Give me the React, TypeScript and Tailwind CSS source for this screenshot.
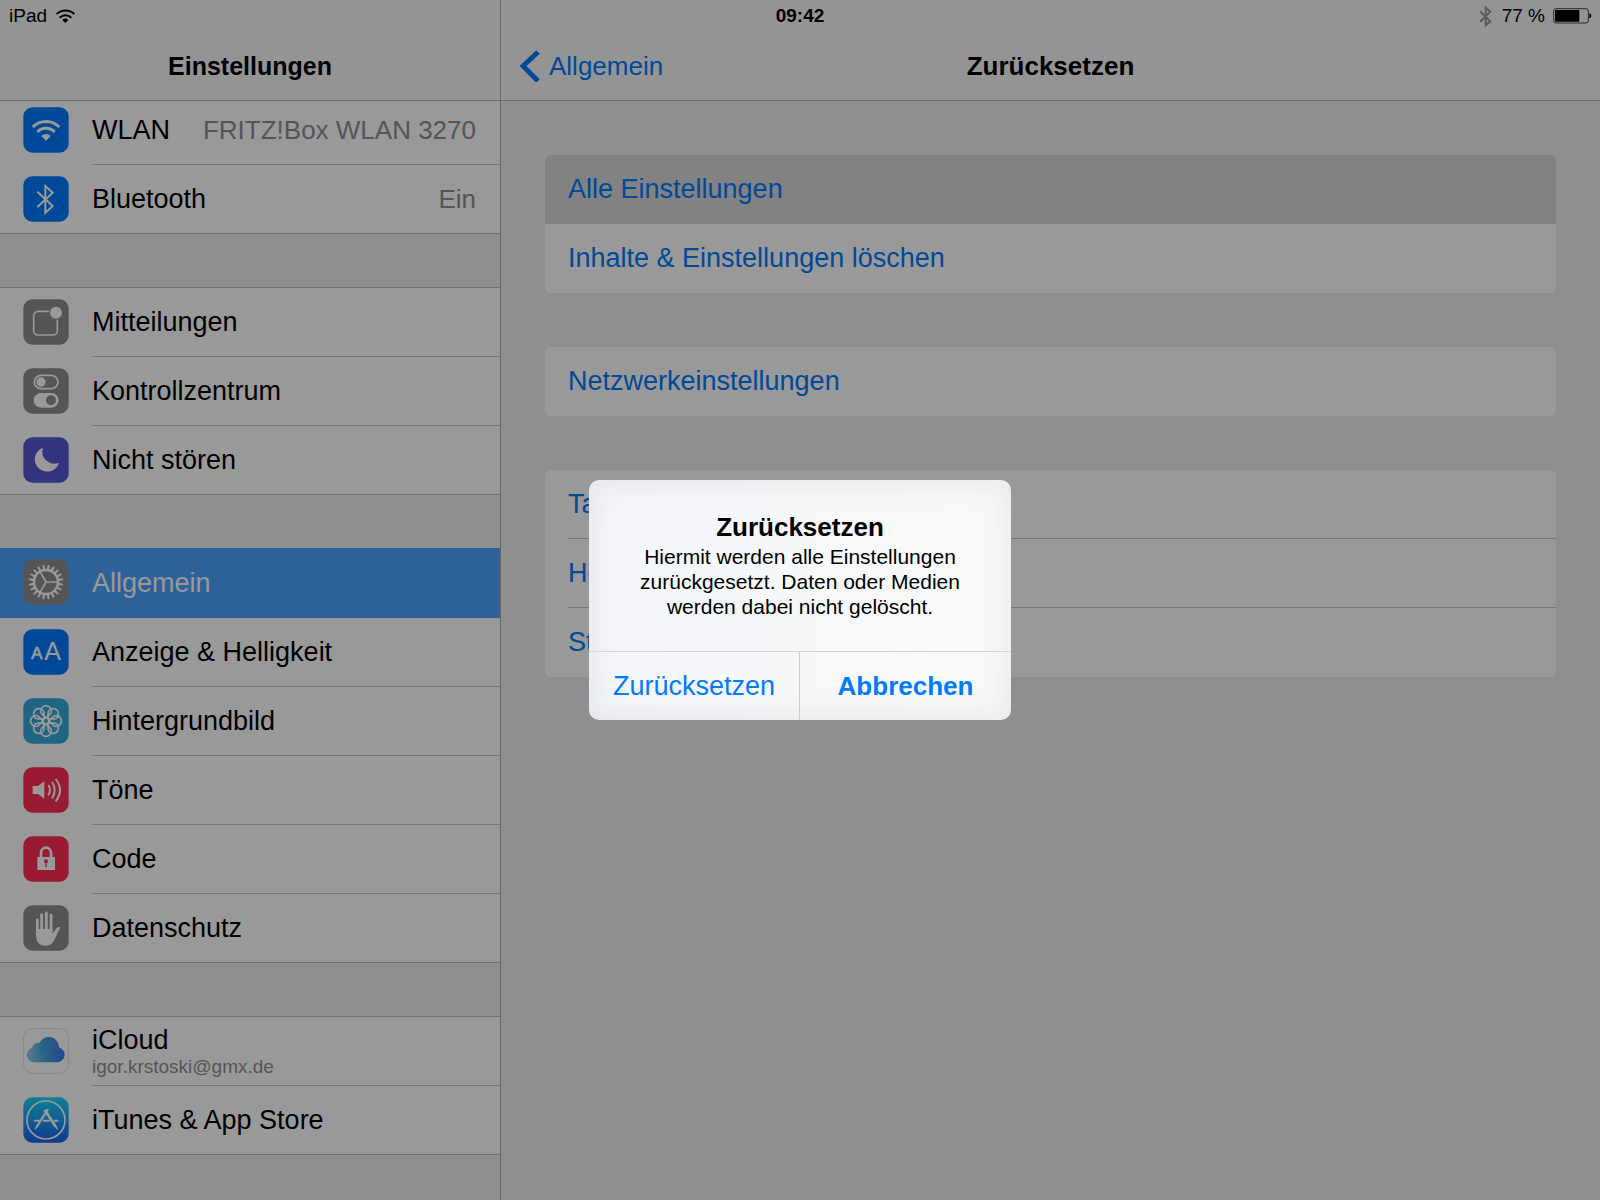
import type { ReactNode } from "react";

const SANS = "font-['Liberation_Sans',Arial,sans-serif]";

function Tile({ fill, children }: { fill: string; children: ReactNode }) {
  return (
    <svg viewBox="0 0 138 138" className="size-[46px] shrink-0" fill="none" aria-hidden="true">
      <rect x="1" y="1" width="136" height="136" rx="27" fill={fill} />
      {children}
    </svg>
  );
}

const WlanIcon = () => (
  <Tile fill="#007aff">
    <g stroke="#fff" strokeWidth="9">
      <path d="M29 60 A56 56 0 0 1 109 60" />
      <path d="M43 75 A36 36 0 0 1 95 75" />
    </g>
    <path d="M69 101 L55 87 A19 19 0 0 1 83 87 Z" fill="#fff" />
  </Tile>
);

const BluetoothIcon = () => (
  <Tile fill="#007aff">
    <path d="M43 47 L89 90 L67 111 V30 L89 50 L43 93" stroke="#fff" strokeWidth="6" />
  </Tile>
);

const NotificationsIcon = () => (
  <Tile fill="#8e8e93">
    <rect x="32" y="37" width="71" height="71" rx="13" stroke="#fff" strokeWidth="5" />
    <circle cx="99" cy="41" r="22" fill="#8e8e93" />
    <circle cx="99" cy="41" r="18" fill="#fff" />
  </Tile>
);

const ControlCenterIcon = () => (
  <Tile fill="#8e8e93">
    <rect x="34" y="22" width="71" height="40" rx="20" stroke="#fff" strokeWidth="5" />
    <circle cx="54" cy="42" r="14" fill="#fff" />
    <rect x="32" y="75" width="75" height="44" rx="22" fill="#fff" />
    <circle cx="84" cy="97" r="15" fill="#8e8e93" />
  </Tile>
);

const MoonIcon = () => (
  <Tile fill="#5856d6">
    <path d="M60 32 A37 37 0 1 0 108 77 A36 36 0 0 1 60 32 Z" fill="#fff" />
  </Tile>
);

const TEETH = Array.from({ length: 20 }, (_, i) => i * 18 + 9);

const GearIcon = () => (
  <Tile fill="#8e8e93">
    {TEETH.map((a) => (
      <path key={a} d="M65 34 L66.5 17 H71.5 L73 34 Z" fill="#fff" transform={`rotate(${a} 69 69)`} />
    ))}
    <circle cx="69" cy="69" r="36" stroke="#fff" strokeWidth="7" />
    <path d="M69 69 H104 M69 69 L51 38 M69 69 L51 100" stroke="#fff" strokeWidth="5" />
  </Tile>
);

const DisplayIcon = () => (
  <Tile fill="#007aff">
    <g fill="#fff" stroke="#fff" className="font-['Liberation_Sans',Arial,sans-serif]">
      <text x="25" y="89" fontSize="50" strokeWidth="2">A</text>
      <text x="64" y="94" fontSize="75" strokeWidth="0">A</text>
    </g>
  </Tile>
);

const PETALS = [0, 45, 90, 135, 180, 225, 270, 315];

const FlowerIcon = () => (
  <Tile fill="#34aadc">
    <g stroke="#fff" strokeWidth="5">
      {PETALS.map((a) => (
        <path key={a} d="M69 60 L56 47 A16 15 0 1 1 82 47 Z" transform={`rotate(${a} 69 69)`} />
      ))}
      <circle cx="69" cy="69" r="9" />
    </g>
  </Tile>
);

const SoundIcon = () => (
  <Tile fill="#ff2d55">
    <path d="M29 57 H45 L64 43 V95 L45 81 H29 Z" fill="#fff" />
    <g stroke="#fff" strokeWidth="6">
      <path d="M76 54 Q86 69 76 85" />
      <path d="M87 45 Q103 69 87 94" />
      <path d="M98 36 Q124 69 98 103" />
    </g>
  </Tile>
);

const LockIcon = () => (
  <Tile fill="#ff2d55">
    <path d="M54 66 V50 A15 15 0 0 1 84 50 V66" stroke="#fff" strokeWidth="8" />
    <rect x="43" y="63" width="53" height="39" fill="#fff" />
    <circle cx="69" cy="76" r="6" fill="#ff2d55" />
    <path d="M69 78 V94" stroke="#ff2d55" strokeWidth="4" />
  </Tile>
);

const HandIcon = () => (
  <Tile fill="#8e8e93">
    <path d="M43 45 V84 M56 29 V84 M70 24 V84 M84 30 V84" stroke="#fff" strokeWidth="8.5" strokeLinecap="round" />
    <path
      d="M39 72 H88 V86 Q94 80 97 74 Q102 66 109 65 Q114 66 110 71 Q105 78 102 88 Q96 103 91 110 Q84 122 67 122 Q39 121 39 92 Z"
      fill="#fff"
    />
  </Tile>
);

const CloudIcon = () => (
  <svg viewBox="0 0 138 138" className="size-[46px] shrink-0" fill="none" aria-hidden="true">
    <defs>
      <linearGradient id="cloud" x1="13" y1="80" x2="126" y2="80" gradientUnits="userSpaceOnUse">
        <stop offset="0" stopColor="#8ad0ec" />
        <stop offset="0.45" stopColor="#47a7e0" />
        <stop offset="1" stopColor="#3c72e4" />
      </linearGradient>
      <linearGradient id="cloudTop" x1="50" y1="90" x2="100" y2="30" gradientUnits="userSpaceOnUse">
        <stop offset="0" stopColor="#42ace0" />
        <stop offset="1" stopColor="#4186dc" />
      </linearGradient>
    </defs>
    <rect x="2" y="2" width="134" height="134" rx="27" fill="#fff" stroke="#e0e0e0" strokeWidth="3" />
    <path
      d="M35 103 A22 22 0 0 1 27 60 A18 18 0 0 1 49 45 A31 31 0 0 1 108 58 A23 23 0 0 1 104 103 Z"
      fill="url(#cloud)"
    />
    <path d="M49 45 A31 31 0 0 1 108 58 Q94 58 86 70 Q78 88 60 84 Q44 66 49 45 Z" fill="url(#cloudTop)" opacity="0.6" />
  </svg>
);

const StoreIcon = () => (
  <Tile fill="url(#store)">
    <defs>
      <linearGradient id="store" x1="0" y1="0" x2="0" y2="1">
        <stop offset="0" stopColor="#1ad5fd" />
        <stop offset="1" stopColor="#1d5ff0" />
      </linearGradient>
    </defs>
    <circle cx="69" cy="69" r="57" stroke="#fff" strokeWidth="5" />
    <g stroke="#fff">
      <path d="M33 71 H50 M60 71 H80 M92 71 H106" strokeWidth="6" />
      <path d="M75 36 L41 90" strokeWidth="7" />
      <path d="M42 87 L36 97" strokeWidth="4" />
      <path d="M65 38 L98 89" strokeWidth="8" />
      <path d="M96 84 L103 97" strokeWidth="4" />
    </g>
  </Tile>
);

type Item = {
  label: string;
  icon: ReactNode;
  value?: string;
  detail?: string;
  selected?: boolean;
};

const GROUPS: Item[][] = [
  [
    { label: "WLAN", icon: <WlanIcon />, value: "FRITZ!Box WLAN 3270" },
    { label: "Bluetooth", icon: <BluetoothIcon />, value: "Ein" },
  ],
  [
    { label: "Mitteilungen", icon: <NotificationsIcon /> },
    { label: "Kontrollzentrum", icon: <ControlCenterIcon /> },
    { label: "Nicht stören", icon: <MoonIcon /> },
  ],
  [
    { label: "Allgemein", icon: <GearIcon />, selected: true },
    { label: "Anzeige & Helligkeit", icon: <DisplayIcon /> },
    { label: "Hintergrundbild", icon: <FlowerIcon /> },
    { label: "Töne", icon: <SoundIcon /> },
    { label: "Code", icon: <LockIcon /> },
    { label: "Datenschutz", icon: <HandIcon /> },
  ],
  [
    { label: "iCloud", icon: <CloudIcon />, detail: "igor.krstoski@gmx.de" },
    { label: "iTunes & App Store", icon: <StoreIcon /> },
  ],
];

function SidebarRow({ item, last }: { item: Item; last: boolean }) {
  const tone = item.selected ? "-mt-px h-[70px] bg-[#4aa3ff] text-white" : "h-[69px] text-black";
  const line = last || item.selected ? "" : "border-b border-[#c8c7cc]";
  return (
    <button
      type="button"
      className={`flex w-full gap-[23px] pl-[23px] text-left ${tone} ${last ? "border-b border-[#bcbbc1]" : ""}`}
    >
      <span className="flex pt-[11px]">{item.icon}</span>
      <span className={`flex h-full min-w-0 flex-1 items-center justify-between gap-4 pr-6 ${line}`}>
        <span className={item.detail ? "flex flex-col pt-1" : "flex flex-col"}>
          <span className={item.detail ? "leading-[28px]" : "leading-[30px]"}>{item.label}</span>
          {item.detail && <span className="text-[19px] leading-[26px] text-[#8e8e93]">{item.detail}</span>}
        </span>
        {item.value && <span className="text-[26px] whitespace-nowrap text-[#8e8e93]">{item.value}</span>}
      </span>
    </button>
  );
}

const RESET_GROUPS = [
  ["Alle Einstellungen", "Inhalte & Einstellungen löschen"],
  ["Netzwerkeinstellungen"],
  ["Tastatur", "Home", "Standort"],
];

function ResetCard({ rows }: { rows: string[] }) {
  return (
    <div className="overflow-hidden rounded-md bg-white">
      {rows.map((label, i) => {
        const pressed = label === "Alle Einstellungen";
        const line = i < rows.length - 1 && !pressed ? "border-b border-[#c8c7cc]" : "";
        return (
          <button
            key={label}
            type="button"
            className={`flex h-[69px] w-full pl-[23px] text-left text-[#007aff] ${pressed ? "bg-[#d9d9d9]" : ""}`}
          >
            <span className={`flex h-full flex-1 items-center ${line}`}>{label}</span>
          </button>
        );
      })}
    </div>
  );
}

function StatusBar() {
  return (
    <div className="absolute inset-x-0 top-0 z-10 grid h-8 grid-cols-3 items-center px-2 text-[19px] leading-[32px] text-black">
      <div className="flex items-center gap-[9px] pl-px">
        <span>iPad</span>
        <svg viewBox="0 0 57 42" className="h-[14px] w-[19px]" fill="none" aria-label="WLAN">
          <g stroke="#000" strokeWidth="6">
            <path d="M2 15 A38 38 0 0 1 55 15" />
            <path d="M11 26 A25 25 0 0 1 46 26" />
          </g>
          <path d="M28 42 L19 33 A13 13 0 0 1 37 33 Z" fill="#000" />
        </svg>
      </div>
      <div className="text-center font-bold">09:42</div>
      <div className="flex items-center justify-end">
        <svg viewBox="0 0 39 63" className="mr-[10px] h-[21px] w-[13px]" fill="none" aria-label="Bluetooth">
          <path d="M3 16 L34 46 L20 58 V5 L34 17 L3 47" stroke="#9a9a9a" strokeWidth="6" />
        </svg>
        <span>77 %</span>
        <svg viewBox="0 0 117 48" className="ml-2 h-4 w-[39px]" fill="none" aria-label="Batterie">
          <rect x="2" y="2" width="104" height="43" rx="7" stroke="#444" strokeWidth="3" />
          <rect x="6" y="6" width="73" height="35" rx="2" fill="#000" />
          <path d="M109 16 Q115 17 115 24 Q115 30 109 31 Z" fill="#000" />
        </svg>
      </div>
    </div>
  );
}

export default function App() {
  return (
    <div className={`relative h-screen overflow-hidden bg-[#efeff4] text-[27px] ${SANS}`}>
      <div className="flex h-full">
        <aside className="flex w-[501px] shrink-0 flex-col border-r border-[#a9a9ad]">
          <header className="z-10 flex h-[101px] shrink-0 items-end justify-center border-b border-[#b2b2b6] bg-[#f7f7f8] pb-[18px]">
            <h1 className="text-[25px] leading-[32px] font-bold">Einstellungen</h1>
          </header>
          <nav className="-mt-[5px] flex flex-col gap-[53px]" aria-label="Einstellungen">
            {GROUPS.map((group, g) => (
              <div key={g} className={`bg-white ${g > 0 ? "border-t border-[#bcbbc1]" : ""}`}>
                {group.map((item, i) => (
                  <SidebarRow key={item.label} item={item} last={i === group.length - 1} />
                ))}
              </div>
            ))}
          </nav>
        </aside>
        <main className="flex min-w-0 flex-1 flex-col">
          <header className="grid h-[101px] shrink-0 grid-cols-3 items-end border-b border-[#b2b2b6] bg-[#f7f7f8] px-[19px] pb-[18px]">
            <button type="button" className="flex items-center gap-[9px] text-[26px] leading-[32px] text-[#007aff]">
              <svg viewBox="0 0 20 32" className="h-8 w-5" fill="none" aria-hidden="true">
                <path d="M18 2 L3 16 L18 31" stroke="currentColor" strokeWidth="5" />
              </svg>
              Allgemein
            </button>
            <h2 className="text-center text-[26px] leading-[32px] font-bold">Zurücksetzen</h2>
          </header>
          <div className="flex flex-col gap-[54px] px-11 pt-[54px]">
            {RESET_GROUPS.map((rows) => (
              <ResetCard key={rows[0]} rows={rows} />
            ))}
          </div>
        </main>
      </div>
      <StatusBar />
      <div className="absolute inset-0 z-20 flex items-center justify-center bg-black/40">
        <div
          role="alertdialog"
          aria-labelledby="alert-title"
          aria-describedby="alert-text"
          className="w-[422px] overflow-hidden rounded-[10px] bg-[#f8f9fa] bg-linear-to-r from-[#f3f7fa] to-[#f9f9f9] shadow-[inset_0_0_36px_rgba(0,0,0,0.08)]"
        >
          <div className="px-9 pt-[30px] pb-8 text-center">
            <h2 id="alert-title" className="text-[26px] leading-[34px] font-bold">
              Zurücksetzen
            </h2>
            <p id="alert-text" className="text-[21px] leading-[25px]">
              Hiermit werden alle Einstellungen zurückgesetzt. Daten oder Medien werden dabei nicht gelöscht.
            </p>
          </div>
          <div className="grid h-[69px] grid-cols-2 border-t border-[#d3d6da] text-[#007aff]">
            <button type="button" className="border-r border-[#c9ced4]">
              Zurücksetzen
            </button>
            <button type="button" className="text-[26px] font-bold">
              Abbrechen
            </button>
          </div>
        </div>
      </div>
    </div>
  );
}
